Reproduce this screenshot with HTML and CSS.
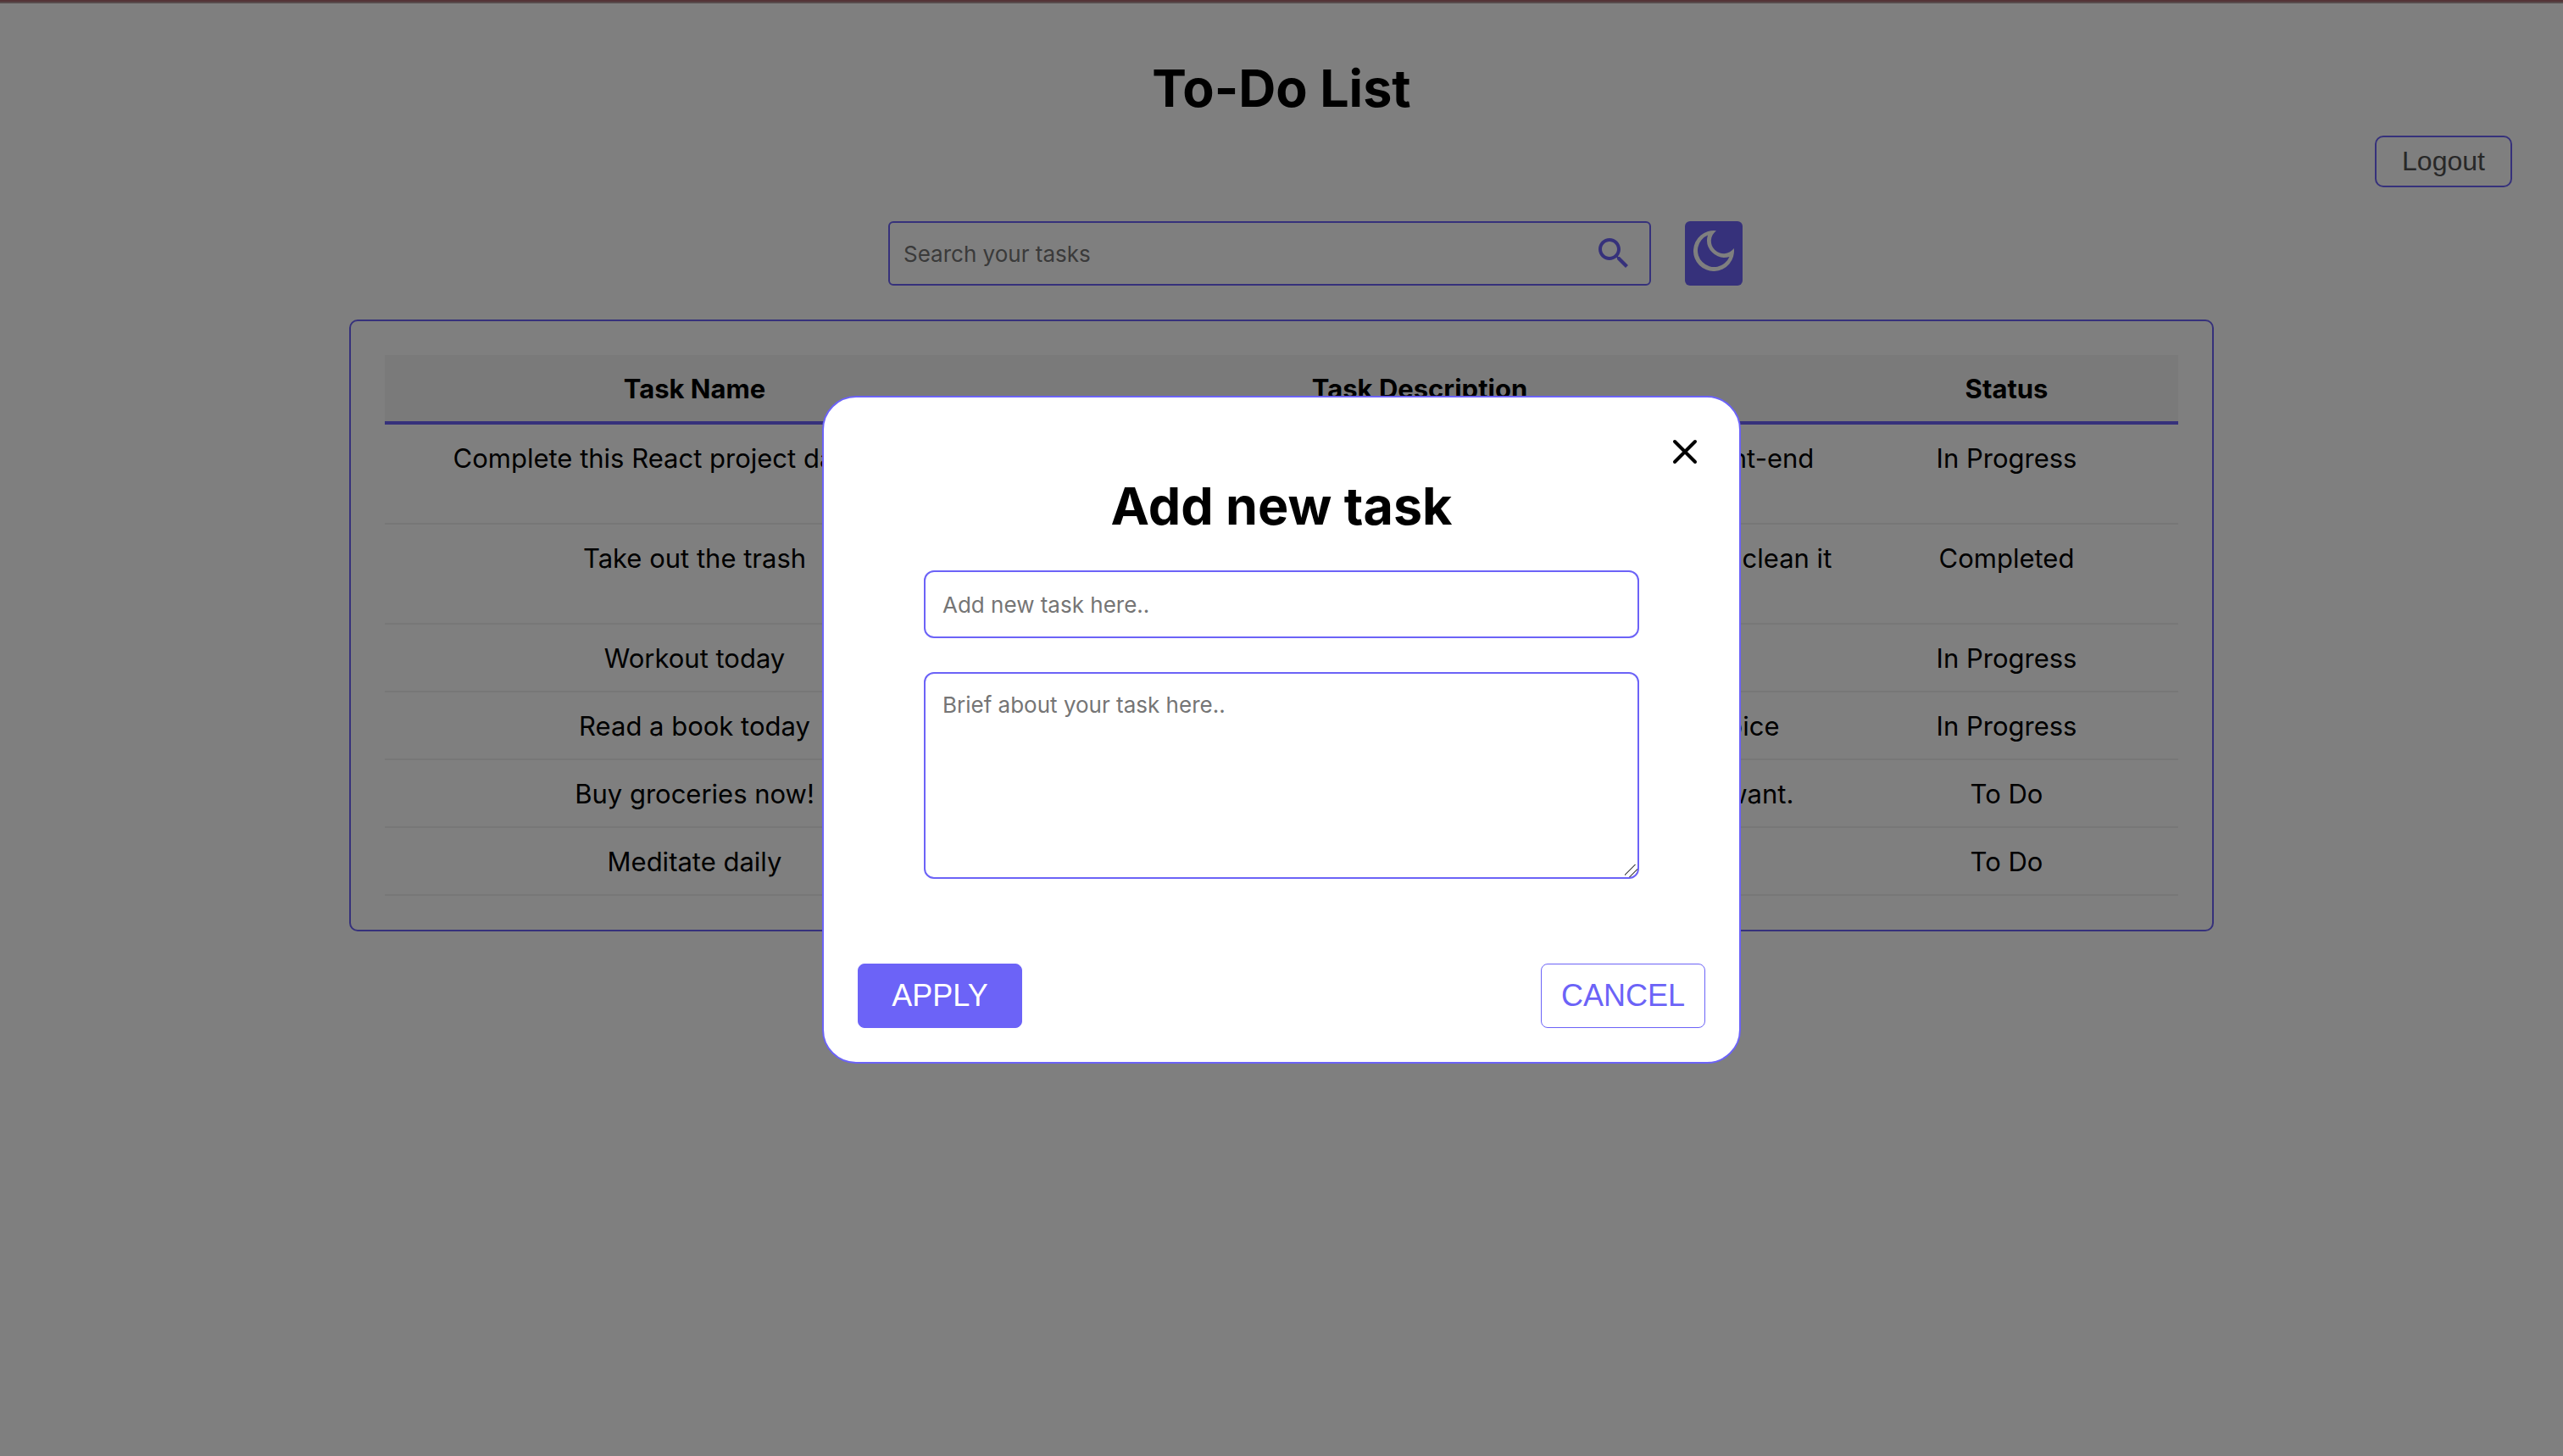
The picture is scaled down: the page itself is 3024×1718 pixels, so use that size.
FILE: index.html
```html
<!DOCTYPE html>
<html lang="en">
<head>
<meta charset="utf-8">
<title>To-Do List</title>
<link rel="stylesheet" href="styles.css">
</head>
<body>
<main class="page">
  <h1 class="title">To-Do List</h1>
  <div class="account">
    <button class="logout" type="button">Logout</button>
  </div>
  <div class="toolbar">
    <form class="search" role="search">
      <input class="search-input" type="search" placeholder="Search your tasks" aria-label="Search your tasks">
      <button class="search-button" type="button" aria-label="Search">
        <svg viewBox="0 0 24 24" width="48" height="48" fill="currentColor"><path d="M15.500 14h-.79l-.28-.27C15.410 12.590 16 11.110 16 9.500 16 5.910 13.090 3 9.500 3S3 5.910 3 9.500 5.910 16 9.500 16c1.610 0 3.090-.59 4.230-1.570l.27.28v.79l5 4.990L20.490 19l-4.990-5zm-6 0C7.010 14 5 11.990 5 9.500S7.010 5 9.500 5 14 7.010 14 9.500 11.990 14 9.500 14z"/></svg>
      </button>
    </form>
    <button class="theme" type="button" aria-label="Toggle dark mode">
      <svg viewBox="0 0 48 48" width="48" height="48" fill="currentColor" fill-rule="evenodd"><path d="M27 0.200A24 24 0 1 0 47.800 21A14.900 14.900 0 1 1 27 0.200ZM17 5.500A19.500 19.500 0 1 0 42.500 31A20.500 20.500 0 0 1 17 5.500Z"/></svg>
    </button>
  </div>
  <section class="card">
    <table class="tasks">
      <colgroup><col class="col-name"><col class="col-description"><col class="col-status"></colgroup>
      <thead>
        <tr><th scope="col">Task Name</th><th scope="col">Task Description</th><th scope="col">Status</th></tr>
      </thead>
      <tbody>
        <tr><td>Complete this React project dashboard</td><td>Complete this project using React and its tools for the front-end<br>and deploy it</td><td>In Progress</td></tr>
        <tr><td>Take out the trash</td><td>Take out the trash from the kitchen before the evening and clean it<br>afterwards</td><td>Completed</td></tr>
        <tr><td>Workout today</td><td>Go to the gym for an hour</td><td>In Progress</td></tr>
        <tr><td>Read a book today</td><td>Read at least thirteen pages from any book of your choice</td><td>In Progress</td></tr>
        <tr><td>Buy groceries now!</td><td>Buy fruits, vegetables and all of the other stuff that we want.</td><td>To Do</td></tr>
        <tr><td>Meditate daily</td><td>Meditate for ten minutes</td><td>To Do</td></tr>
      </tbody>
    </table>
  </section>
</main>
<div class="overlay">
  <form class="modal" role="dialog" aria-modal="true" aria-labelledby="modal-title">
    <button class="close" type="button" aria-label="Close">
      <svg viewBox="0 0 32 32" width="32" height="32" fill="none" stroke="currentColor" stroke-width="4" stroke-linecap="round"><path d="M4 4L28 28M28 4L4 28"/></svg>
    </button>
    <h2 class="modal-title" id="modal-title">Add new task</h2>
    <div class="fields">
      <input class="field" type="text" placeholder="Add new task here.." aria-label="Task name">
      <textarea class="field field-brief" placeholder="Brief about your task here.." aria-label="Task description"></textarea>
    </div>
    <div class="actions">
      <button class="action action-apply" type="submit">APPLY</button>
      <button class="action action-cancel" type="button">CANCEL</button>
    </div>
  </form>
</div>
</body>
</html>
```
FILE: styles.css
```css
:root {
  --accent: #6c63f7;
  --line: #eeeeee;
}

* { box-sizing: border-box; }

body {
  margin: 0;
  background: #ffffff;
  color: #000000;
  font-family: Inter, "Liberation Sans", sans-serif;
  font-size: 31px;
  line-height: 38px;
}

button {
  padding: 0;
  border: 0;
  background: none;
  color: inherit;
  font-family: "Liberation Sans", Arial, sans-serif;
  cursor: pointer;
}

svg { display: block; }

input, textarea { font-family: inherit; }

::placeholder { color: #757575; opacity: 1; }

.page {
  min-height: 100vh;
  padding-top: 62px;
  border-top: 2px solid #a8686f;
  box-shadow: inset 0 2px #b09698;
}

.title {
  margin: 0;
  font-size: 61px;
  line-height: 80px;
  text-align: center;
}

.account {
  display: flex;
  justify-content: flex-end;
  padding: 16px 60px 0;
}

.logout {
  width: 162px;
  height: 61px;
  border: 2px solid var(--accent);
  border-radius: 10px;
  color: #505050;
  font-size: 32px;
}

.toolbar {
  display: flex;
  justify-content: center;
  gap: 40px;
  padding: 40px 0 0 80px;
}

.search {
  display: flex;
  align-items: center;
  width: 900px;
  height: 76px;
  padding: 0 18px 0 16px;
  border: 2px solid var(--accent);
  border-radius: 6px;
}

.search-input {
  flex: 1;
  min-width: 0;
  padding: 0;
  border: 0;
  outline: 0;
  background: none;
  font-size: 26px;
}

.search-button { color: var(--accent); }

.theme {
  display: flex;
  justify-content: center;
  width: 68px;
  height: 76px;
  padding-top: 11px;
  border-radius: 6px;
  background: var(--accent);
  color: #ffffff;
}

.card {
  width: 2200px;
  max-width: 100%;
  margin: 40px auto 0;
  padding: 40px;
  border: 2px solid var(--accent);
  border-radius: 10px;
}

.tasks {
  width: 100%;
  border-collapse: separate;
  border-spacing: 0;
  table-layout: fixed;
  text-align: center;
}

.col-name { width: 731px; }
.col-description { width: 980px; }

.tasks th {
  padding: 21px 0 19px;
  border-bottom: 4px solid var(--accent);
  background: #f5f5f5;
}

.tasks td {
  padding: 21px 0 19px;
  border-bottom: 2px solid var(--line);
  vertical-align: top;
  white-space: nowrap;
}

.overlay {
  position: fixed;
  inset: 0;
  display: flex;
  align-items: center;
  justify-content: center;
  padding-top: 4px;
  background: rgba(0, 0, 0, 0.5);
}

.modal {
  display: flex;
  flex-direction: column;
  width: 1084px;
  padding: 48px 40px 40px;
  border: 2px solid var(--accent);
  border-radius: 40px;
  background: #ffffff;
}

.close {
  align-self: flex-end;
  margin-right: 8px;
}

.modal-title {
  margin: 8px 0 36px;
  font-size: 61px;
  line-height: 80px;
  text-align: center;
}

.fields {
  display: flex;
  flex-direction: column;
  gap: 40px;
  padding: 0 78px;
}

.field {
  width: 100%;
  height: 80px;
  padding: 0 20px;
  border: 2px solid var(--accent);
  border-radius: 12px;
  outline: 0;
  background: #ffffff;
  font-size: 26px;
  line-height: 36px;
}

.field-brief {
  display: block;
  height: 244px;
  padding: 19px 20px;
  resize: both;
}

.field-brief::-webkit-resizer {
  background: linear-gradient(135deg,
    transparent 37%, #6f6f6f 38% 44%, transparent 45% 64%, #6f6f6f 65% 71%, transparent 72%);
}

.actions {
  display: flex;
  justify-content: space-between;
  padding-top: 100px;
}

.action {
  width: 194px;
  height: 76px;
  border: 1px solid var(--accent);
  border-radius: 8px;
  font-size: 36px;
}

.action-apply {
  background: var(--accent);
  color: #ffffff;
}

.action-cancel { color: var(--accent); }
```
